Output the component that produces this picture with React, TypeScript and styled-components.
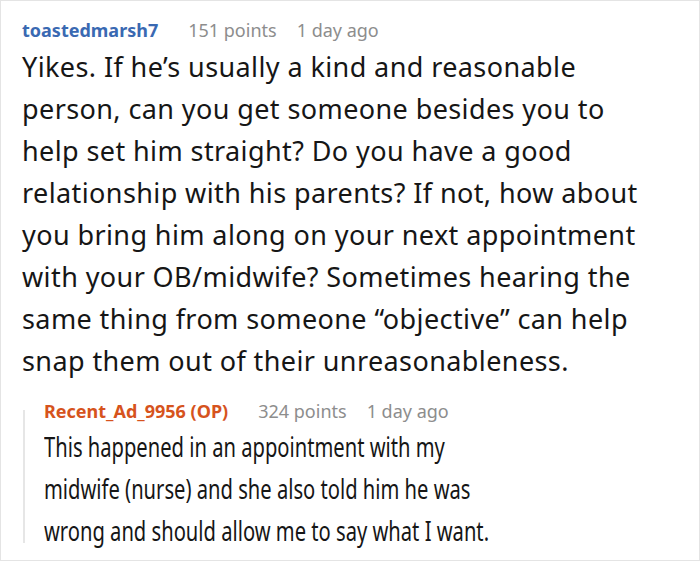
import React from "react";
import styled, { createGlobalStyle } from "styled-components";

const Global = createGlobalStyle`
  html, body { margin: 0; padding: 0; background: #fff; }
  body { font-family: "Noto Sans", "Open Sans", sans-serif; }
`;

const Card = styled.div`
  box-sizing: border-box;
  width: 700px;
  height: 561px;
  border: 1px solid #e4e4e4;
  padding: 17px 0 0 21px;
  background: #fff;
  overflow: hidden;
`;

const Meta = styled.div`
  display: flex;
  align-items: baseline;
  height: 24px;
  line-height: 24px;
  font-size: 18px;
  white-space: nowrap;
`;

const User = styled.span<{ $op?: boolean }>`
  font-weight: 700;
  color: ${(p) => (p.$op ? "#d6531d" : "#3a69b2")};
  margin-right: 30px;
`;

const Stat = styled.span`
  color: #8d8d8d;
  margin-right: 20px;
`;

const Body = styled.p`
  margin: 4px 0 0;
  font-size: 27px;
  letter-spacing: 0.4px;
  line-height: 42px;
  color: #161616;
  white-space: nowrap;
`;

const Reply = styled.div`
  position: relative;
  margin-top: 17px;
  padding-left: 22px;
  &::before {
    content: "";
    position: absolute;
    left: 1px;
    top: 11px;
    height: 133px;
    width: 2px;
    background: #e6e6e6;
  }
`;

/* the reply text in the reference is a narrow (condensed) face */
const ReplyBody = styled(Body)`
  margin-top: 3px;
  font-size: 27px;
  letter-spacing: 0;
  transform: scaleX(0.747);
  transform-origin: left center;
`;

export default function App() {
  return (
    <>
      <Global />
      <Card>
        <Meta>
          <User>toastedmarsh7</User>
          <Stat>151 points</Stat>
          <Stat>1 day ago</Stat>
        </Meta>
        <Body>
          Yikes. If he’s usually a kind and reasonable
          <br />
          person, can you get someone besides you to
          <br />
          help set him straight? Do you have a good
          <br />
          relationship with his parents? If not, how about
          <br />
          you bring him along on your next appointment
          <br />
          with your OB/midwife? Sometimes hearing the
          <br />
          same thing from someone “objective” can help
          <br />
          snap them out of their unreasonableness.
        </Body>
        <Reply>
          <Meta>
            <User $op>Recent_Ad_9956 (OP)</User>
            <Stat>324 points</Stat>
            <Stat>1 day ago</Stat>
          </Meta>
          <ReplyBody>
            This happened in an appointment with my
            <br />
            midwife (nurse) and she also told him he was
            <br />
            wrong and should allow me to say what I want.
          </ReplyBody>
        </Reply>
      </Card>
    </>
  );
}
